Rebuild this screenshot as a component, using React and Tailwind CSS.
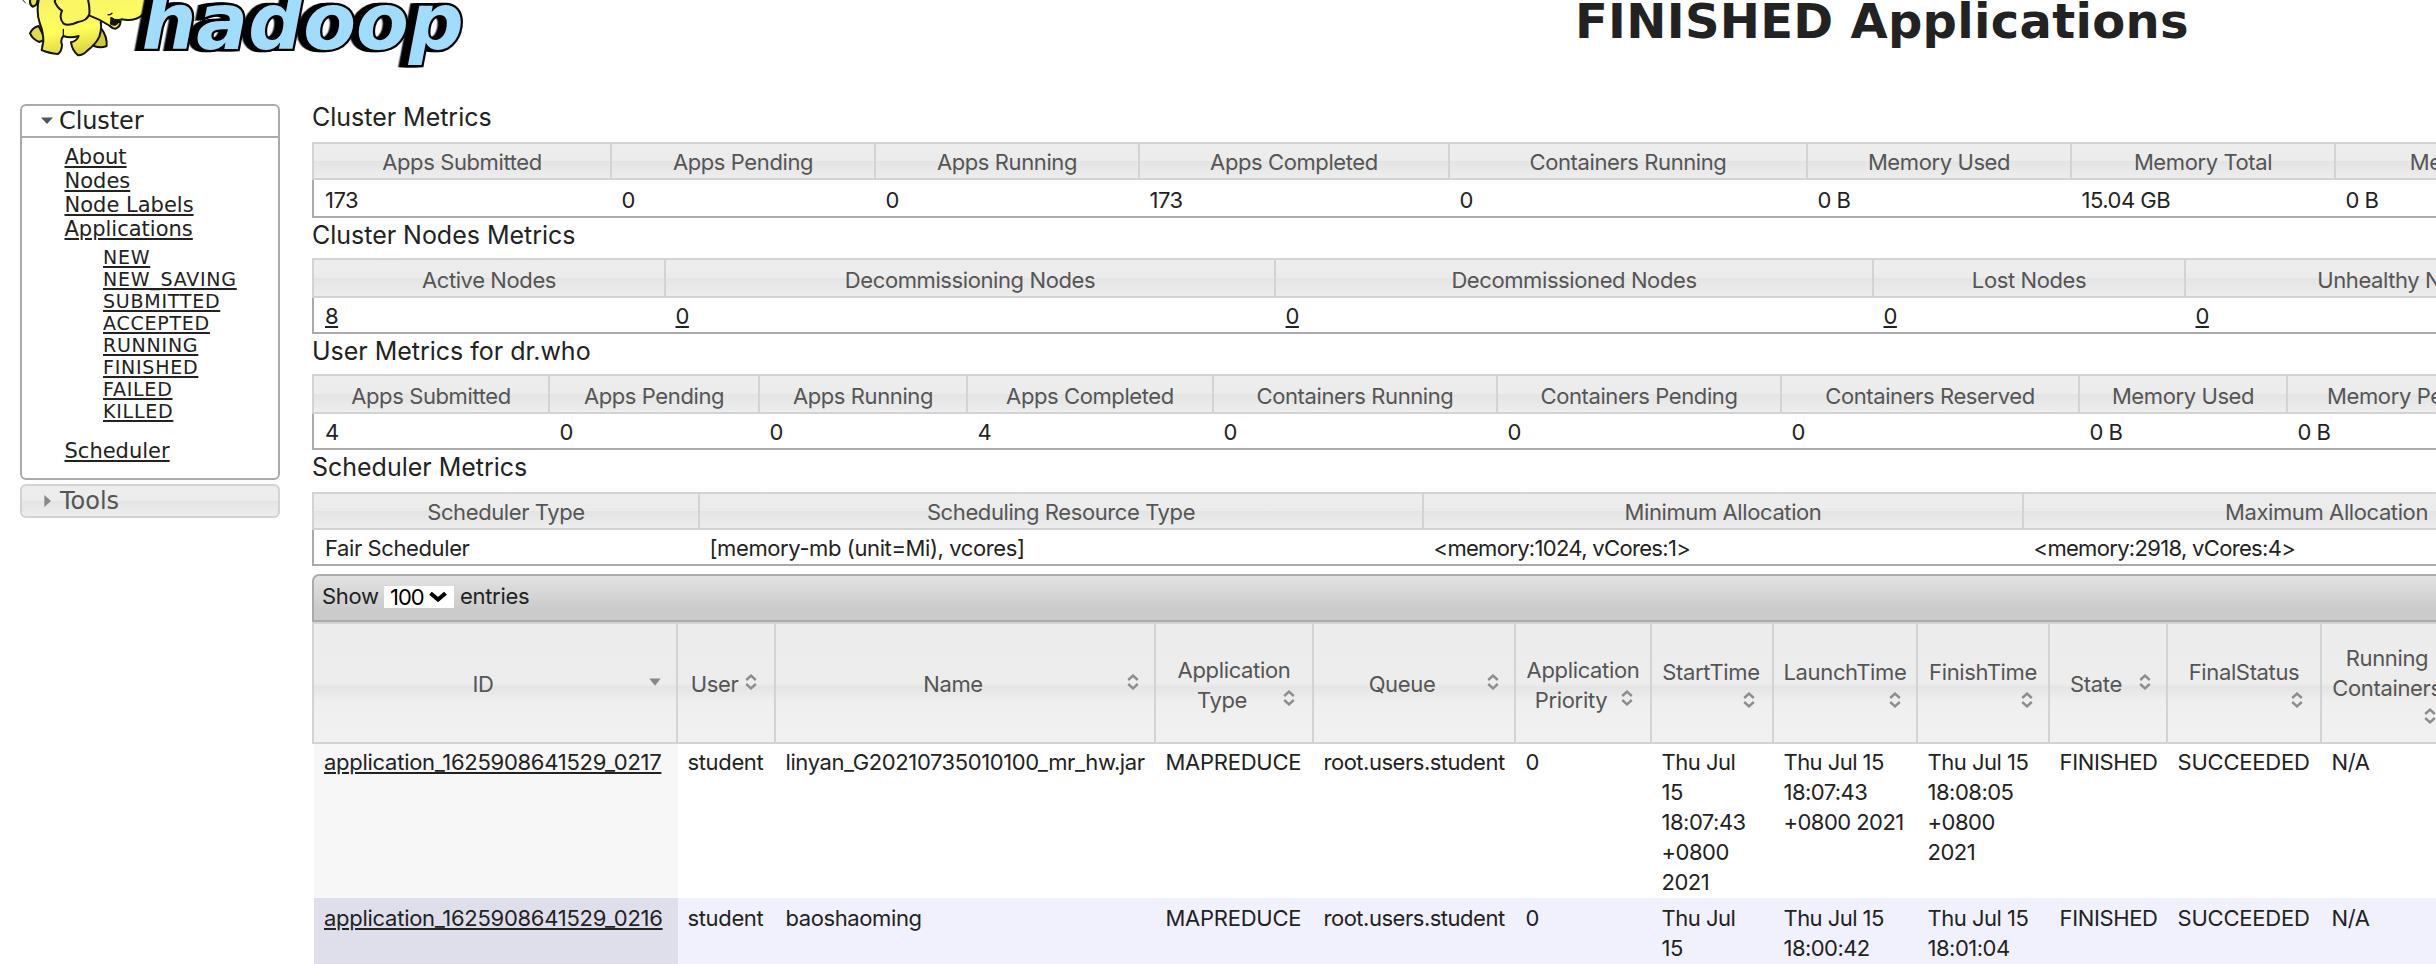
import React from "react";

const METRICS = [
  {
    title: "Cluster Metrics",
    titleCls: "h-[42px]",
    headCls: "h-[38px] leading-[34px] pt-[1px]",
    bodyCls: "h-[38px] leading-[36px] pt-[2px]",
    cols: [
      ["Apps Submitted", "173", "w-[300px]"],
      ["Apps Pending", "0", "w-[264px]"],
      ["Apps Running", "0", "w-[264px]"],
      ["Apps Completed", "173", "w-[310px]"],
      ["Containers Running", "0", "w-[358px]"],
      ["Memory Used", "0 B", "w-[264px]"],
      ["Memory Total", "15.04 GB", "w-[264px]"],
      ["Memory Reserved", "0 B", "w-[334px]"],
    ],
  },
  {
    title: "Cluster Nodes Metrics",
    titleCls: "h-10",
    headCls: "h-10 leading-[36px] pt-[2px]",
    bodyCls: "h-9 leading-[34px] pt-[1px]",
    link: true,
    cols: [
      ["Active Nodes", "8", "w-[354px]"],
      ["Decommissioning Nodes", "0", "w-[610px]"],
      ["Decommissioned Nodes", "0", "w-[598px]"],
      ["Lost Nodes", "0", "w-[312px]"],
      ["Unhealthy Nodes", "0", "w-[438px]"],
    ],
  },
  {
    title: "User Metrics for dr.who",
    titleCls: "h-10",
    headCls: "h-10 leading-[36px] pt-[2px]",
    bodyCls: "h-9 leading-[34px] pt-[1px]",
    cols: [
      ["Apps Submitted", "4", "w-[238px]"],
      ["Apps Pending", "0", "w-[210px]"],
      ["Apps Running", "0", "w-[208px]"],
      ["Apps Completed", "4", "w-[246px]"],
      ["Containers Running", "0", "w-[284px]"],
      ["Containers Pending", "0", "w-[284px]"],
      ["Containers Reserved", "0", "w-[298px]"],
      ["Memory Used", "0 B", "w-[208px]"],
      ["Memory Pending", "0 B", "w-[252px]"],
    ],
  },
  {
    title: "Scheduler Metrics",
    titleCls: "h-[42px]",
    headCls: "h-[38px] leading-[34px] pt-[1px]",
    bodyCls: "h-9 leading-[34px] pt-[1px]",
    cols: [
      ["Scheduler Type", "Fair Scheduler", "w-[388px] tracking-[-0.4px]"],
      ["Scheduling Resource Type", "[memory-mb (unit=Mi), vcores]", "w-[724px] tracking-[-0.4px]"],
      ["Minimum Allocation", "<memory:1024, vCores:1>", "w-[600px] tracking-[-0.68px]", "tracking-[-0.4px]"],
      ["Maximum Allocation", "<memory:2918, vCores:4>", "w-[607px] tracking-[-0.68px]", "tracking-[-0.4px]"],
    ],
  },
];

const GLASS = "bg-[linear-gradient(to_bottom,#ededed_0%,#ececec_50%,#e4e4e4_51%,#ededed_100%)]";

function MetricsTable({ title, titleCls, headCls, bodyCls, cols, link }) {
  return (
    <section>
      <h3 className={"text-[25px] leading-[34px] tracking-[-0.02px] whitespace-nowrap " + titleCls}>{title}</h3>
      <div className={"flex overflow-hidden border-y-2 border-[#d3d3d3] text-[#555] tracking-[-0.4px] " + GLASS}>
        {cols.map(([head, , w, track], i) => (
          <div key={i} className={"shrink-0 text-center whitespace-nowrap border-r-2 border-[#d3d3d3] " + (i === 0 ? "border-l-2 " : "") + w}>
            <div className={headCls + " -mb-1 " + (track || "")}>{head}</div>
          </div>
        ))}
      </div>
      <div className={"flex overflow-hidden border-l-2 border-b-2 border-[#aaa] tracking-[-0.5px] " + bodyCls}>
        {cols.map(([, value, w], i) => (
          <div key={i} className={"shrink-0 whitespace-nowrap " + (i === 0 ? "-ml-[2px] pl-[13px] " : "pl-[9.5px] ") + w}>
            {link ? <a className="underline decoration-2 underline-offset-[2px]">{value}</a> : value}
          </div>
        ))}
      </div>
    </section>
  );
}

function SortBoth({ cls }) {
  return (
    <svg viewBox="0 0 12 16" className={"col-start-1 row-start-1 h-4 w-3 justify-self-end " + cls} fill="none" stroke="#8d8d8d" strokeWidth="2.4">
      <path d="M1.2 6 L6 1.6 L10.8 6" />
      <path d="M1.2 10 L6 14.4 L10.8 10" />
    </svg>
  );
}

const COLS = [
  { w: "w-[366px]", lines: ["ID"], t: "mt-[45px] mr-6", sort: "desc" },
  { w: "w-[98px]", lines: ["User"], t: "mt-[45px] mr-[23px]", i: "mt-[50px] mr-[17px]" },
  { w: "w-[380px]", lines: ["Name"], t: "mt-[45px] mr-6", i: "mt-[50px] mr-[15px]" },
  { w: "w-[158px]", lines: ["Application", "Type"], t: "mt-[31px]", i: "mt-[66px] mr-[17px]", pull: true },
  { w: "w-[202px]", lines: ["Queue"], t: "mt-[45px] mr-6", i: "mt-[50px] mr-[15px]" },
  { w: "w-[136px]", lines: ["Application", "Priority"], t: "mt-[31px]", i: "mt-[66px] mr-[17px]", pull: true },
  { w: "w-[122px]", lines: ["StartTime"], t: "mt-[33px] mr-[2px]", i: "mt-[68px] mr-[17px]" },
  { w: "w-[144px]", lines: ["LaunchTime"], t: "mt-[33px]", i: "mt-[68px] mr-[15px]" },
  { w: "w-[132px]", lines: ["FinishTime"], t: "mt-[33px]", i: "mt-[68px] mr-[15px]" },
  { w: "w-[118px]", lines: ["State"], t: "mt-[45px] mr-6", i: "mt-[50px] mr-[15px]" },
  { w: "w-[154px]", lines: ["FinalStatus"], t: "mt-[33px]", i: "mt-[68px] mr-[17px]" },
  { w: "w-[132px]", lines: ["Running", "Containers"], t: "mt-[19px]", i: "mt-[84px] mr-[16px]" },
];

const TRACK = [
  "tracking-[-0.27px]",
  "tracking-[-0.35px]",
  "tracking-[-0.4px]",
  "tracking-[-0.25px]",
  "tracking-[-0.48px]",
  "tracking-[-0.5px]",
  "tracking-[-0.5px]",
  "tracking-[-0.55px]",
  "tracking-[-0.5px]",
  "tracking-[-0.35px]",
  "tracking-[-0.2px]",
  "tracking-[-0.3px]",
];

const ROWS = [
  {
    row: "h-[154px] bg-white",
    pad: "pt-[3px]",
    id: "bg-[#f7f7f7]",
    cells: [
      ["application_1625908641529_0217"], ["student"], ["linyan_G20210735010100_mr_hw.jar"], ["MAPREDUCE"],
      ["root.users.student"], ["0"], ["Thu Jul", "15", "18:07:43", "+0800", "2021"],
      ["Thu Jul 15", "18:07:43", "+0800 2021"], ["Thu Jul 15", "18:08:05", "+0800", "2021"],
      ["FINISHED"], ["SUCCEEDED"], ["N/A"],
    ],
  },
  {
    row: "h-[66px] bg-[#f1f1fe]",
    pad: "pt-[5px]",
    id: "bg-[#dfdfec]",
    cells: [
      ["application_1625908641529_0216"], ["student"], ["baoshaoming"], ["MAPREDUCE"],
      ["root.users.student"], ["0"], ["Thu Jul", "15"],
      ["Thu Jul 15", "18:00:42"], ["Thu Jul 15", "18:01:04"],
      ["FINISHED"], ["SUCCEEDED"], ["N/A"],
    ],
  },
];

function AppsTable() {
  return (
    <section>
      <div className="mt-2 flex h-12 items-start rounded-tl-[7px] border-2 border-r-0 border-[#aaa] bg-[linear-gradient(to_bottom,#e2e2e2_0%,#cbcbcb_75%,#cbcbcb_100%)] pl-[8px] leading-[30px]">
        <span className="mt-[5px] w-[62px] tracking-[-0.3px]">Show</span>
        <span className="mt-[10px] flex h-[22px] w-[70px] items-center bg-white pl-[6px] text-black">
          <span className="w-[39px] tracking-[-1px]">100</span>
          <svg viewBox="0 0 18 10" className="h-[10px] w-[18px]" fill="none" stroke="#000" strokeWidth="4">
            <path d="M1.5 1.2 L9 7.6 L16.5 1.2" />
          </svg>
        </span>
        <span className="mt-[5px] ml-[6px] tracking-[-0.3px]">entries</span>
      </div>
      <div className="flex h-[122px] overflow-hidden border-y-2 border-l-2 border-[#d3d3d3] bg-[linear-gradient(to_bottom,#ececec_0%,#ededed_50%,#e5e5e5_54%,#efefef_66%,#f1f1f1_100%)] text-[#555]">
        {COLS.map((c, n) => (
          <div key={n} className={"grid shrink-0 content-start border-r-2 border-[#d3d3d3] " + (n === 0 ? "-ml-[2px] pl-[2px] " : "") + c.w}>
            <div className={"col-start-1 row-start-1 text-center leading-[30px] tracking-[-0.35px] " + c.t}>
              {c.lines.map((l, k) => (
                <div key={l} className={c.pull && k === 1 ? "pr-6" : ""}>{l}</div>
              ))}
            </div>
            {c.sort ? (
              <svg viewBox="0 0 12 8" className="col-start-1 row-start-1 mt-[54px] mr-[15px] h-2 w-3 justify-self-end" fill="#888">
                <path d="M0.3 0.6 H11.7 L6 7.8 Z" />
              </svg>
            ) : (
              <SortBoth cls={c.i} />
            )}
          </div>
        ))}
      </div>
      {ROWS.map((r, n) => (
        <div key={n} className={"ml-[2px] flex overflow-hidden " + r.row}>
          {r.cells.map((lines, k) => (
            <div key={k} className={"shrink-0 whitespace-nowrap leading-[30px] " + r.pad + " " + TRACK[k] + " " + (k === 0 ? "-ml-[2px] border-l-2 border-white pl-[10px] " + r.id + " " : "pl-[9.5px] ") + COLS[k].w}>
              {lines.map((l) => (
                <div key={l}>{k === 0 ? <a className="underline decoration-2 underline-offset-[2px]">{l}</a> : l}</div>
              ))}
            </div>
          ))}
        </div>
      ))}
    </section>
  );
}

const STATES = ["NEW", "NEW_SAVING", "SUBMITTED", "ACCEPTED", "RUNNING", "FINISHED", "FAILED", "KILLED"];

function Sidebar() {
  const u = "underline decoration-2 underline-offset-[2px]";
  return (
    <nav className="mt-1 ml-5 w-[260px] shrink-0 font-['DejaVu_Sans',Verdana,sans-serif]">
      <div className="h-[376px] rounded-[6px] border-2 border-[#aaa] bg-white">
        <div className="flex h-8 items-start border-b-2 border-[#aaa] pl-[19px]">
          <svg viewBox="0 0 12 7" className="mt-[11px] h-[7px] w-3" fill="#555"><path d="M0 0.4 H12 L6 7 Z" /></svg>
          <span className="ml-[6px] text-[24px] leading-[31px] tracking-[-0.1px]">Cluster</span>
        </div>
        <ul className="mt-[7px] ml-[42.5px] text-[21px] leading-6 text-[#222]">
          {["About", "Nodes", "Node Labels", "Applications"].map((t) => (
            <li key={t}><a className={u}>{t}</a></li>
          ))}
          <ul className="mt-[5px] ml-[38.5px] text-[19px] leading-[22px] tracking-[0.75px]">
            {STATES.map((t) => (
              <li key={t}><a className={u}>{t}</a></li>
            ))}
          </ul>
          <li className="mt-[17px]"><a className={u}>Scheduler</a></li>
        </ul>
      </div>
      <div className="mt-1 flex h-[34px] items-start rounded-[6px] border-2 border-[#d3d3d3] bg-[linear-gradient(to_bottom,#ededed_0%,#ececec_50%,#e4e4e4_51%,#ededed_100%)] pl-[22px] text-[#555]">
        <svg viewBox="0 0 7 12" className="mt-[9px] h-3 w-[7px]" fill="#888"><path d="M0.4 0 V12 L7 6 Z" /></svg>
        <span className="ml-[9px] text-[24px] leading-[31px]">Tools</span>
      </div>
    </nav>
  );
}

function Logo() {
  return (
    <svg viewBox="0 0 1500 240" className="h-20 w-[500px] shrink-0">
      <defs>
        <linearGradient id="skin" x1="0" y1="0" x2="0.3" y2="1">
          <stop offset="0" stopColor="#f4f06a" />
          <stop offset="0.6" stopColor="#ffff5c" />
          <stop offset="1" stopColor="#d8d43c" />
        </linearGradient>
      </defs>
      <g stroke="#141408" strokeWidth="6" strokeLinejoin="round" strokeLinecap="round">
        <path d="M92 -4 Q86 12 98 20 Q112 16 112 2" fill="#e6e050" />
        <path d="M68 0 L76 8 M370 0 L378 4 M384 -4 L390 4" strokeWidth="3" fill="none" />
        <path d="M116 78 Q98 82 90 100 Q98 118 118 126 L136 118 Z" fill="#e0dc46" />
        <path d="M296 80 L304 86 Q322 110 320 138 Q302 146 282 138 L270 110 Z" fill="#cfca3a" />
        <path d="M326 72 Q334 86 346 86 Q360 82 362 64 Z" fill="#e6e050" />
        <path d="M122 -10 Q106 34 120 72 Q130 96 130 124 L125 150 Q146 160 174 162 Q186 152 186 134 Q180 120 190 108 Q210 116 236 108 Q230 124 213 127 Q216 150 234 166 Q250 166 262 152 Q288 132 298 110 Q306 86 302 62 L330 78 L334 54 Q346 64 364 58 Q404 66 428 44 L436 -10 Z" fill="url(#skin)" stroke="none" />
        <path d="M116 0 Q108 38 120 72 Q130 96 130 124 L125 150 Q146 160 174 162 Q186 152 186 134 Q180 120 190 108 Q210 116 236 108 Q230 124 213 127 Q216 150 234 166 Q250 166 262 152 Q288 132 298 110 Q306 86 302 66 M262 44 Q300 58 330 78 M334 54 Q346 64 364 58 Q404 66 428 44" fill="none" />
        <path d="M164 4 Q172 24 186 32 Q176 54 190 70 Q204 80 234 66 Q262 62 268 42 Q270 20 262 -10 L170 -10 Z" fill="#fbf762" />
        <path d="M334 54 Q346 64 358 60 Q356 72 346 76 Q336 76 332 72 Z" fill="#141408" strokeWidth="3" />
        <path d="M324 44 Q330 46 336 40 M190 88 V106" fill="none" strokeWidth="4" />
      </g>
      <text
        x="425" y="148" textLength="966" lengthAdjust="spacingAndGlyphs"
        className="font-['DejaVu_Sans',Verdana,sans-serif] text-[234px] font-bold italic [paint-order:stroke] [filter:drop-shadow(-7px_0_0_#000)_drop-shadow(-14px_0_0_#000)]"
        fill="#a0dcfb" stroke="#000" strokeWidth="14" strokeLinejoin="miter"
      >
        hadoop
      </text>
    </svg>
  );
}

export default function App() {
  return (
    <div className="h-[964px] w-full overflow-hidden bg-white font-[Inter,'Liberation_Sans',sans-serif] text-[22px] text-[#222]">
      <header className="flex h-[100px] items-start overflow-hidden">
        <Logo />
        <h1 className="-mt-[7px] ml-[1075px] font-['DejaVu_Sans',Verdana,sans-serif] text-[48px] leading-[56px] font-bold tracking-[0.3px] whitespace-nowrap">
          FINISHED Applications
        </h1>
      </header>
      <div className="flex">
        <Sidebar />
        <main className="ml-8 min-w-0 flex-1 overflow-hidden">
          {METRICS.map((m) => (
            <MetricsTable key={m.title} {...m} />
          ))}
          <AppsTable />
        </main>
      </div>
    </div>
  );
}
